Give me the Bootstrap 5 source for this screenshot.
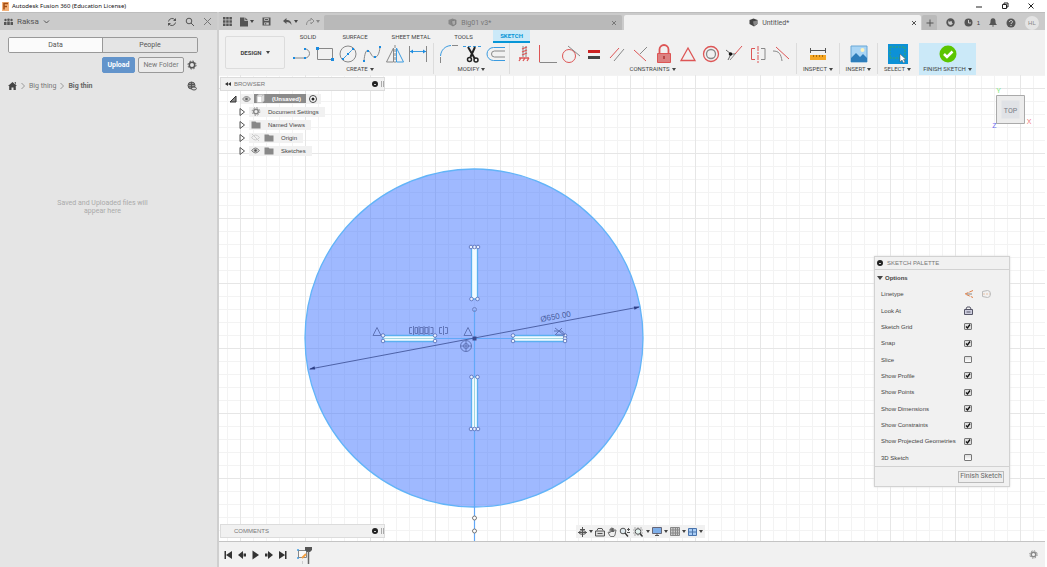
<!DOCTYPE html>
<html lang="en">
<head>
<meta charset="utf-8">
<meta name="viewport" content="width=device-width, initial-scale=1">
<title>Autodesk Fusion 360 (Education License)</title>
<link href="https://cdn.jsdelivr.net/npm/bootstrap@5.3.0/dist/css/bootstrap.min.css" rel="stylesheet">
<style>
  body { font-family: "Liberation Sans", Arial, sans-serif; font-size: 6px; line-height: 8px; color: #444; background: #fff; }
  button { font-size: 6px; line-height: 8px; color: inherit; }
  svg { display: block; flex: none; fill: none; stroke: #555; }
  .app { min-height: 100vh; padding: 0 2px 1px 0; }
  .plain { background: none; border: 0; padding: 0; display: flex; align-items: center; }
  .caret { width: 0; height: 0; border: 2px solid transparent; border-top: 3px solid #444; border-bottom: 0; margin-left: 2px; flex: none; }
  .caret.wide { border-width: 4px 3px 0; margin-left: 0; }

  .title-bar { height: 12px; font-family: "Noto Sans", sans-serif; color: #111; padding: 0 10px 0 1px; gap: 2px; }
  .strip { height: 18px; background: #cbcbcb; border-top: 1px solid #bdbdbd; }

  .side { width: 219px; background: #e5e5e5; border-right: 2px solid #cfcfcf; color: #555; font-family: Roboto, "Liberation Sans", sans-serif; }
  .side .strip { padding: 0 5px 0 4px; }
  .hub { font-size: 8px; color: #555; gap: 4px; }
  .seg { height: 16px; margin: 7px 19px 0 8px; border: 1px solid #999; border-radius: 2px; overflow: hidden; }
  .seg button { border: 0; background: #e5e5e5; font-size: 7px; color: #555; }
  .seg button.active { background: #fbfbfb; border-right: 1px solid #999; }
  .side-actions { margin-top: 4px; padding-right: 20px; gap: 3px; }
  .side-actions .btn { --bs-btn-padding-x: 0; --bs-btn-padding-y: 0; font-size: 7px; line-height: 13px; height: 16px; border-radius: 2px; }
  .btn-up, .btn-up:hover { width: 33px; background: #6394cb; border-color: #6394cb; color: #fff; font-weight: bold; }
  .btn-new { width: 46px; border-color: #999; color: #777; background: #ebebeb; }
  .crumbs { margin-top: 8px; padding: 0 20px 0 8px; height: 10px; gap: 4px; font-size: 7px; color: #777; }
  .crumbs a { color: inherit; text-decoration: none; }
  .crumbs .here { color: #666; font-weight: bold; }
  .empty-note { margin: 108px auto 0; width: 96px; font-size: 7px; color: #aaa; }

  .quick { width: 105px; padding-left: 4px; }
  .quick svg { fill: #555; stroke: none; }
  .doc-tab { height: 15px; background: #b9b9b9; color: #777; border-radius: 2px 2px 0 0; padding: 0 4px; font-size: 7px; font-family: Roboto, sans-serif; }
  .doc-tab.current { background: #f1f1f1; color: #555; margin-left: 2px; }
  .acct { width: 124px; padding: 0 6px 0 1px; }
  .acct .add { width: 15px; height: 15px; background: #bababa; justify-content: center; border-radius: 2px 2px 0 0; }
  .acct .avatar { width: 14px; height: 14px; border-radius: 50%; background: #e4e4e4; color: #888; line-height: 14px; }

  .ribbon { background: #f1f1f1; font-family: Roboto, sans-serif; height: 45px; padding-left: 6px; }
  .design { width: 60px; height: 33px; margin-top: 6px; margin-right: 5px; border: 1px solid #dcdcdc; border-radius: 2px; justify-content: center; font-weight: bold; }
  .modes { height: 13px; padding-left: 4px; }
  .modes button { height: 13px; justify-content: center; font-size: 6px; }
  .m-solid { width: 28px; } .m-surface { width: 66px; } .m-sheet { width: 46px; } .m-tools { width: 59px; } .m-sketch { width: 37px; }
  .modes .on { background: #cbe9f8; color: #0696d7; font-weight: bold; border-bottom: 2px solid #0696d7; }
  .grp { height: 31px; border-right: 1px solid #dcdcdc; }
  .grp .tools { height: 22px; display: flex; align-items: center; justify-content: space-around; }
  .grp > .plain { margin: 0 auto; white-space: nowrap; height: 8px; }
  .g-create { width: 144px; padding-right: 3px; } .g-modify { width: 76px; padding: 0 3px; } .g-constrain { width: 287px; padding: 0 3px 0 2px; }
  .g-inspect { width: 43px; } .g-insert { width: 38px; } .g-select { width: 39px; border: 0; }
  .grp.done { background: #cbe9f8; border: 0; height: 32px; width: 57px; margin-left: 2px; }
  .r { stroke: #dd5555; } .b { stroke: #3a9be0; } .g { stroke: #888; } .k { stroke: #222; }
  .bf { fill: #1b8be0; stroke: none; } 

  .stage { overflow: hidden; background: #fff; min-height: 466px; }
  .bar-panel { width: 165px; height: 14px; background: #f1f1f1; border: 1px solid #dcdcdc; color: #777; padding: 0 0 0 3px; gap: 2px; }
  .dot { width: 6px; height: 6px; border-radius: 50%; background: #222; flex: none; display: flex; align-items: center; justify-content: center; }
  .dot::after { content: ""; width: 2px; height: 1px; background: #ccc; }
  .grip { width: 3px; height: 6px; border: solid #aaa; border-width: 0 1px; margin-left: 1px; }
  .bar-panel .name { padding-left: 10px; }
  .browser { left: 1px; top: 2px; }
  .comments { left: 1px; bottom: 3px; }
  .tree { margin: 1px 0 0 9px; padding: 0; list-style: none; }
  .tree li { height: 13px; display: flex; align-items: center; gap: 4px; }
  .tree .kid { padding-left: 10px; gap: 4px; }
  .tree .cell { background: #f1f1f1; height: 10px; display: flex; align-items: center; gap: 3px; padding: 0 6px 0 1px; }
  .tree .kid .cell { gap: 4px; padding-left: 2px; }
  .tree .kid .cell span { padding-left: 3px; }
  .picked { background: #8b8b8b; color: #fff; height: 9px; padding: 0 5px 0 1px; gap: 7px; }
  .cube { right: 12px; top: 10px; width: 44px; height: 46px; }
  .viewbar { left: 357px; bottom: 3px; height: 13px; width: 129px; background: #f1f1f1; padding: 0 2px; }

  .palette { right: 35px; top: 181px; width: 136px; background: #f1f1f1; border: 1px solid #d2d2d2; box-shadow: 0 0 2px #ddd; }
  .palette header { height: 13px; border-bottom: 1px solid #d2d2d2; padding-left: 2px; gap: 4px; color: #777; }
  .palette h2 { font-size: 6px; line-height: 8px; font-weight: bold; margin: 0; padding: 4px 0 4px 2px; gap: 2px; }
  .opts { display: grid; grid-auto-rows: 1fr; height: 180px; padding-left: 6px; }
  .opts > div { display: flex; align-items: center; }
  .opts label, .opts .lab { width: 83px; }
  .opts input { appearance: none; width: 8px; height: 7px; margin: 0; border: 1px solid #777; border-radius: 1px; background: linear-gradient(#ddd, #fff); }
  .opts input:checked { background: #ddd url("data:image/svg+xml,%3Csvg xmlns='http://www.w3.org/2000/svg' viewBox='0 0 6 5'%3E%3Cpath d='M1 2.5L2.5 4L5 .5' fill='none' stroke='%23111' stroke-width='1.3'/%3E%3C/svg%3E") center / 6px 5px no-repeat; }
  .palette footer { border-top: 1px solid #d2d2d2; height: 20px; padding: 0 5px; }
  .palette footer button { height: 12px; width: 46px; border: 1px solid #bbb; background: #eee; padding: 0; font-family: Roboto, sans-serif; font-size: 7px; line-height: 9px; color: #666; }

  .timeline { background: #f1f1f1; border-top: 1px solid #c4c4c4; height: 26px; padding: 0 7px 0 4px; }
  .timeline .play { gap: 4px; }
  .timeline .play svg { fill: #333; stroke: none; }
</style>
</head>
<body>
<div class="app d-flex flex-column">

  <div class="title-bar d-flex align-items-center">
    <svg width="9" height="9" viewBox="0 0 9 9"><path d="M1 0h7v9H1z" fill="#f3b27a" stroke="none"/><path d="M3 7.500V1.500H7M3 4.500H6" stroke="#a34b10" stroke-width="1.500"/></svg>
    <span class="me-auto">Autodesk Fusion 360 (Education License)</span>
    <button class="plain" aria-label="Minimize"><svg width="8" height="8"><path d="M1 5h6" stroke="#222"/></svg></button>
    <button class="plain mx-3" aria-label="Restore"><svg width="8" height="8"><path d="M1.500 2.500h4v4h-4zM3 2.500V1h4v4H5.500" stroke="#222"/></svg></button>
    <button class="plain" aria-label="Close"><svg width="8" height="8"><path d="M1.500 1.500l5 5M6.500 1.500l-5 5" stroke="#222"/></svg></button>
  </div>

  <div class="d-flex flex-grow-1">

    <aside class="side flex-shrink-0">
      <div class="strip d-flex align-items-center">
        <button class="plain hub">
          <svg width="9" height="8" style="fill:#555;stroke:none"><circle cx="1.500" cy="2" r="1.200"/><circle cx="4.500" cy="1.800" r="1.300"/><circle cx="7.500" cy="2" r="1.200"/><path d="M0 7V4h2.500v3zM3.200 7V3.600h2.600V7zM6.500 7V4H9v3z"/></svg>
          <span>Raksa</span>
          <svg width="7" height="6"><path d="M1 1.500l2.500 2.500L6 1.500"/></svg>
        </button>
        <button class="plain ms-auto" aria-label="Refresh"><svg width="10" height="10"><path d="M1.500 4.500a3.600 3.600 0 0 1 6.500-1.500M8.500 5.500a3.600 3.600 0 0 1-6.500 1.500"/><path d="M9 1v3H6zM1 9V6h3z" fill="#555" stroke="none"/></svg></button>
        <button class="plain ms-2" aria-label="Search"><svg width="10" height="10"><circle cx="4" cy="4" r="2.800"/><path d="M6 6l3 3"/></svg></button>
        <button class="plain ms-2" aria-label="Close panel"><svg width="9" height="9"><path d="M1 1l7 7M8 1L1 8" stroke="#777"/></svg></button>
      </div>
      <div class="seg d-flex">
        <button class="w-50 active">Data</button><button class="w-50">People</button>
      </div>
      <div class="side-actions d-flex align-items-center justify-content-end">
        <button class="btn btn-up">Upload</button>
        <button class="btn btn-new">New Folder</button>
        <button class="plain" aria-label="Settings"><svg width="10" height="10"><circle cx="5" cy="5" r="2.700" stroke-width="1.500"/><circle cx="5" cy="5" r="4" stroke-dasharray="1.600 1.540"/></svg></button>
      </div>
      <nav class="crumbs d-flex align-items-center" aria-label="Folders">
        <a href="#" aria-label="Home"><svg width="9" height="8" style="fill:#444;stroke:none"><path d="M4.500 0L9 4H7.800v4H5.500V5.500h-2V8H1.200V4H0zM6.500 0h1.300v3z"/></svg></a>
        <svg width="4" height="8"><path d="M.5 1l3 3-3 3" stroke="#999"/></svg>
        <a href="#">Big thing</a>
        <svg width="4" height="8"><path d="M.5 1l3 3-3 3" stroke="#999"/></svg>
        <a href="#" class="here">Big thin</a>
        <button class="plain ms-auto" aria-label="Share"><svg width="10" height="10"><circle cx="4.500" cy="4.500" r="3.500" fill="#999"/><path d="M1 3.500h7M1 5.800h7M4.500 1v7"/><ellipse cx="7" cy="7.500" rx="2.400" ry="1.500" fill="#ddd"/></svg></button>
      </nav>
      <div class="d-flex pe-2 me-1"><p class="empty-note text-center">Saved and Uploaded files will appear here</p></div>
    </aside>

    <main class="d-flex flex-column flex-grow-1">
      <div class="strip d-flex align-items-end">
        <div class="quick d-flex align-items-center h-100 flex-shrink-0">
          <button class="plain" aria-label="Data panel"><svg width="9" height="9"><path d="M0 0h2.500v2.500H0zM3.200 0h2.500v2.500H3.200zM6.400 0h2.500v2.500H6.400zM0 3.200h2.500v2.500H0zM3.200 3.200h2.500v2.500H3.200zM6.400 3.200h2.500v2.500H6.400zM0 6.400h2.500v2.500H0zM3.200 6.400h2.500v2.500H3.200zM6.400 6.400h2.500v2.500H6.400z"/></svg></button>
          <button class="plain ms-2" aria-label="File"><svg width="8" height="10"><path d="M0 .5h4.500V4H8v5.500H0zM5.300.5L8 3.200H5.300z"/></svg><i class="caret"></i></button>
          <button class="plain ms-2" aria-label="Save"><svg width="9" height="9"><path fill-rule="evenodd" d="M.5.5h8v8h-8zM2.200 1.200v2.600h4.600V1.200zM2.200 5.500v2.200h4.600V5.500zM3 2h3v1H3zM3.200 6h1v1.500h-1z"/></svg></button>
          <button class="plain ms-2 ps-1" aria-label="Undo"><svg width="9" height="9"><path d="M0 4L3.500 1v2C7 3 8.500 5 8.500 8 7.500 6 6 5 3.500 5v2z"/></svg><i class="caret"></i></button>
          <button class="plain ms-2 opacity-50" aria-label="Redo"><svg width="8" height="9"><path d="M8 4L5 1v2C2 3 .5 5 .5 8M8 4L5 7V5" style="fill:none;stroke:#555"/></svg><i class="caret"></i></button>
        </div>
        <div class="doc-tab d-flex align-items-center flex-fill w-50">
          <a href="#" class="mx-auto d-flex align-items-center gap-1 text-reset text-decoration-none"><svg width="9" height="9"><path d="M.5 2l4-1.500 4 1.500v4L5 8.500.5 6z" fill="#888" stroke="none"/><path d="M3.500 3l4-1v4.500l-3 1z" fill="#aaa" stroke="#777" stroke-width=".7"/></svg>Big01 v3*</a>
          <button class="plain" aria-label="Close tab"><svg width="6" height="6"><path d="M1 1l4 4M5 1L1 5" stroke="#777"/></svg></button>
        </div>
        <div class="doc-tab current d-flex align-items-center flex-fill w-50">
          <a href="#" class="mx-auto d-flex align-items-center gap-1 text-reset text-decoration-none"><svg width="9" height="9"><path d="M.5 2l4-1.500 4 1.500v4L5 8.500.5 6z" fill="#444" stroke="none"/><path d="M4 3.500l4-1v3.500L5 8z" fill="#888" stroke="none"/></svg>Untitled*</a>
          <button class="plain" aria-label="Close tab"><svg width="6" height="6"><path d="M1 1l4 4M5 1L1 5"/></svg></button>
        </div>
        <div class="acct d-flex align-items-center justify-content-between flex-shrink-0">
          <button class="plain add" aria-label="New tab"><svg width="8" height="8"><path d="M4 .5v7M.5 4h7"/></svg></button>
          <button class="plain" aria-label="Extensions"><svg width="9" height="9"><circle cx="4.500" cy="4.500" r="3.300" stroke-width="1.800"/><path d="M3 3l3-1 1 3" stroke-width="1.500"/></svg></button>
          <button class="plain" aria-label="Jobs"><svg width="9" height="9"><circle cx="4.500" cy="4.500" r="4" fill="#555" stroke="none"/><path d="M4.500 2v3H7" stroke="#ccc"/></svg><span class="ms-1">1</span></button>
          <button class="plain" aria-label="Notifications"><svg width="8" height="9" style="fill:#555;stroke:none"><path d="M4 .3c2 0 2.500 1.500 2.500 3.200C6.500 5.500 7.200 6 8 7H0c.8-1 1.500-1.500 1.500-3.500C1.500 1.800 2 .3 4 .3zM3 7.500h2L4 9z"/></svg></button>
          <button class="plain" aria-label="Help"><svg width="10" height="10"><circle cx="5" cy="5" r="4.500" fill="#555" stroke="none"/><path d="M3.500 4c0-2 3-2 3-.2C6.500 5 5 4.800 5 6M5 7v1" stroke="#ddd"/></svg></button>
          <button class="plain avatar justify-content-center">HL</button>
        </div>
      </div>

      <div class="ribbon d-flex">
        <button class="plain design">DESIGN <i class="caret ms-1"></i></button>
        <div>
          <div class="modes d-flex">
            <button class="plain m-solid">SOLID</button>
            <button class="plain m-surface">SURFACE</button>
            <button class="plain m-sheet">SHEET METAL</button>
            <button class="plain m-tools">TOOLS</button>
            <button class="plain m-sketch on">SKETCH</button>
          </div>
          <div class="d-flex">
            <div class="grp g-create">
              <div class="tools">
                <svg width="20" height="20"><path class="g" d="M2 14h11a4.500 4.500 0 0 0 0-9"/><path class="bf" d="M1 13h2v2H1zM12 13h2v2h-2zM12 4h2v2h-2z"/></svg>
                <svg width="20" height="20"><path class="g" d="M2.500 4.500h15v11h-15z"/><path class="bf" d="M1 3h3v3H1zM16 14h3v3h-3z"/></svg>
                <svg width="20" height="20"><circle class="g" cx="10" cy="10" r="8"/><path class="b" d="M4.500 15.500l11-11" stroke-dasharray="6 1"/><path class="bf" d="M4 14h2v2H4zM9 9h2v2H9zM14 4h2v2h-2z"/></svg>
                <svg width="20" height="20"><path class="g" d="M2 17C3 5 6 4 9 10S17 14 18 3"/><path class="bf" d="M1 16h2v2H1zM5 6h2v2H5zM12 12h2v2h-2zM17 2h2v2h-2z"/></svg>
                <svg width="20" height="20"><path class="g" d="M8.500 4v14H1.500z"/><path class="b" d="M11.500 4v14h7z"/><path class="g" d="M10 1v18" stroke-dasharray="3 1"/></svg>
                <svg width="20" height="20"><path class="g" d="M1.500 2v16M18.500 2v16"/><path class="b" d="M2 7.500h16"/><path class="bf" d="M2 7.500l3-2v4zM18 7.500l-3-2v4z"/></svg>
              </div>
              <button class="plain">CREATE<i class="caret"></i></button>
            </div>
            <div class="grp g-modify">
              <div class="tools">
                <svg width="20" height="20"><path class="b" d="M1.500 12C2 6 6 2 12 1.500"/><path class="g" d="M1.500 13v6M13 1.500h6"/></svg>
                <svg width="20" height="20"><path class="b" d="M1 2.500h18" stroke-dasharray="3 2"/><path class="k" d="M6 3l7 12M13 3L8.500 13" stroke-width="2"/><circle class="k" cx="7.500" cy="15.500" r="2" stroke-width="1.500"/><circle class="k" cx="14" cy="16" r="2" stroke-width="1.500"/></svg>
                <svg width="20" height="20"><path class="b" d="M20 3.500H8.500a6 6 0 0 0 0 13H20"/><path class="g" d="M20 7H9.500a3 3 0 0 0 0 6H20"/></svg>
              </div>
              <button class="plain">MODIFY<i class="caret"></i></button>
            </div>
            <div class="grp g-constrain">
              <div class="tools">
                <svg width="20" height="20"><path d="M9 2v11M12 2v11" class="g"/><path class="r" d="M8 5l5-2M8 8l5-2M8 11l5-2M5 14h10M5 17l2-3M9 17l2-3M13 17l2-3" stroke-width="1.300"/></svg>
                <svg width="20" height="20"><path class="r" d="M2.500 1v17"/><path class="g" d="M2.500 18.500H20"/></svg>
                <svg width="20" height="20"><circle class="r" cx="8" cy="12" r="6.500"/><path class="g" d="M7 2l12 10"/></svg>
                <svg width="20" height="20"><path d="M4 7.500h12" stroke="#c22" stroke-width="3"/><path d="M4 13.500h12" stroke="#444" stroke-width="3"/></svg>
                <svg width="20" height="20"><path class="r" d="M3 14L12 4"/><path class="g" d="M7 17L17 5"/></svg>
                <svg width="20" height="20"><path class="r" d="M3 6l12 11"/><path class="g" d="M9 10l7-7"/></svg>
                <svg width="20" height="20"><path d="M5.500 10V5.500a4.500 4.500 0 0 1 9 0V10" stroke="#d55" stroke-width="1.800"/><path d="M3.500 9.500h13v9h-13z" fill="#dc8080" stroke="#d55"/><path d="M10 12v3" stroke="#a33" stroke-width="1.500"/></svg>
                <svg width="20" height="20"><path class="r" d="M10 4l7 12.500H3z" stroke-width="1.300"/></svg>
                <svg width="20" height="20"><circle class="r" cx="10" cy="10" r="7.500" stroke-width="1.300"/><circle class="g" cx="10" cy="10" r="4.500" stroke-width="1.300"/></svg>
                <svg width="20" height="20"><path d="M2 6l5 4-3 6M7 10l4 0" stroke="#666"/><path class="g" d="M6 16l6-7"/><path class="r" d="M11 10l7-8"/><circle cx="6.500" cy="10" r="1.800" fill="#111" stroke="none"/></svg>
                <svg width="20" height="20"><path class="r" d="M7 4.500H3.500v11H7"/><path class="r" d="M10 2v17" stroke-dasharray="5 1 2 1"/><path class="g" d="M13 4.500h4v11h-4"/></svg>
                <svg width="20" height="20"><path class="g" d="M2 7c6 0 8 3 9 10"/><path class="r" d="M5 3l13 12"/></svg>
              </div>
              <button class="plain">CONSTRAINTS<i class="caret"></i></button>
            </div>
            <div class="grp g-inspect">
              <div class="tools"><svg width="20" height="20"><path d="M3 6.500h14M2.500 4v5M17.500 4v5" stroke="#555"/><path d="M2 11h16v5H2z" fill="#f5a623" stroke="none"/><path d="M5.500 11v2M8.500 11v2M11.500 11v2M14.500 11v2" stroke="#a86a08"/></svg></div>
              <button class="plain">INSPECT<i class="caret"></i></button>
            </div>
            <div class="grp g-insert">
              <div class="tools"><svg width="18" height="18"><path d="M1 1h16v16H1z" fill="#a9d5f5" stroke="#69a7d6"/><path d="M1 13l5-5 4 4 3-3 4 4v4H1z" fill="#2d7dbb" stroke="none"/><circle cx="12.500" cy="5" r="2" fill="#fdf3c0" stroke="none"/></svg></div>
              <button class="plain">INSERT<i class="caret"></i></button>
            </div>
            <div class="grp g-select">
              <div class="tools"><svg width="22" height="22"><path d="M1 1h20v20H1z" fill="#0d91d6" stroke="none"/><path d="M3 4h15v11H3z" stroke="#37a66a" stroke-dasharray="2 1"/><path d="M13 11v8l2-2 1.500 3 1.500-1-1.500-2.500H19z" fill="#fff" stroke="#555" stroke-width=".5"/></svg></div>
              <button class="plain">SELECT<i class="caret"></i></button>
            </div>
            <div class="grp done">
              <div class="tools"><svg width="20" height="20"><circle cx="10" cy="10" r="8.500" fill="#5bc500" stroke="none"/><path d="M6 10l3 3 5.500-5.500" stroke="#fff" stroke-width="2.500"/></svg></div>
              <button class="plain">FINISH SKETCH<i class="caret"></i></button>
            </div>
          </div>
        </div>
      </div>

      <div class="stage position-relative flex-grow-1">
        <!-- Sketch canvas: 13-unit grid with a heavier line every fifth -->
        <svg class="position-absolute top-0 start-0 w-100 h-100" viewBox="219 75 826 466" preserveAspectRatio="xMidYMid slice">
          <defs>
            <pattern id="minor" x="305" y="218" width="13" height="13" patternUnits="userSpaceOnUse"><path d="M.5 0v13M0 .5h13" stroke="#f3f3f3"/></pattern>
            <pattern id="major" x="305" y="218" width="65" height="65" patternUnits="userSpaceOnUse"><path d="M.5 0v65M0 .5h65" stroke="#e6e6e6"/></pattern>
            <g id="pt"><circle r="1.800" fill="#e8efff" stroke="#5269b5" stroke-width=".8"/></g>
            <g id="sym"><path d="M-1.500-3H-4v6h2.500M1.500-3H4v6H1.500M0-4.500v9" stroke="#6075b8"/></g>
          </defs>
          <path d="M219 75h826v466H219z" fill="url(#minor)" stroke="none"/>
          <path d="M219 75h826v466H219z" fill="url(#major)" stroke="none"/>
          <circle cx="474" cy="338" r="169" fill="#4678ff" fill-opacity=".52" stroke="#62b4f8" stroke-width="1.300"/>
          <path d="M474.500 310V541M436 338.500h77" stroke="#62a8f8" stroke-width="1.200"/>
          <g fill="#f0fbff" stroke="#5bb0f0" stroke-width="1.300">
            <path d="M471.500 247h6v52h-6zM471.500 377h6v52h-6zM383 335.500h52v6h-52zM513 335.500h52v6h-52z"/>
            <path d="M474.500 378v50M384 338.500h50M514 338.500h50" stroke="#8ccdd8" stroke-width=".8"/>
          </g>
          <g>
            <use href="#pt" x="471" y="247"/><use href="#pt" x="474.500" y="247"/><use href="#pt" x="478" y="247"/><use href="#pt" x="471.500" y="299"/><use href="#pt" x="477.500" y="299"/>
            <use href="#pt" x="471.500" y="377"/><use href="#pt" x="477.500" y="377"/><use href="#pt" x="471" y="429"/><use href="#pt" x="474.500" y="429"/><use href="#pt" x="478" y="429"/>
            <use href="#pt" x="383" y="335.500"/><use href="#pt" x="383" y="341"/><use href="#pt" x="435" y="335.500"/><use href="#pt" x="435" y="341"/>
            <use href="#pt" x="513" y="335.500"/><use href="#pt" x="513" y="341"/><use href="#pt" x="565" y="335.500"/><use href="#pt" x="565" y="338.500"/><use href="#pt" x="565" y="341"/>
          </g>
          <g stroke="#777" fill="#fff"><circle cx="474.500" cy="518" r="2"/><circle cx="474.500" cy="531" r="2"/></g>
          <circle cx="474.500" cy="309.500" r="2" stroke="#6f83c4"/>
          <path d="M310 369L639 307" stroke="#384b90" stroke-width=".8"/>
          <path d="M309 369.200l5.500-3 .7 3.400zM640 306.800l-5.500 3-.7-3.400z" fill="#2c3f86" stroke="none"/>
          <path d="M472.500 336.500h4v4h-4z" fill="#3a4c92" stroke="none"/>
          <g stroke="#6075b8">
            <path d="M377 327.500l4 8h-8zM468 327.500l4 8h-8z"/>
            <circle cx="466" cy="346" r="5.500"/><circle cx="466" cy="346" r="2.500"/><path d="M460.500 346h11M466 340.500v11"/>
            <path d="M555 328l9 7M555 335l7-7M554 331h8l3 4h-9"/>
          </g>
          <use href="#sym" x="413.500" y="330.500"/><use href="#sym" x="419" y="330.500"/><use href="#sym" x="424" y="330.500"/><use href="#sym" x="429" y="330.500"/><use href="#sym" x="443.500" y="330.500"/>
          <text x="541" y="322" transform="rotate(-10.600 541 322)" font-size="8" fill="#4a5f9f" stroke="none">Ø650.00</text>
        </svg>

        <section class="browser position-absolute">
          <div class="bar-panel d-flex align-items-center">
            <svg width="8" height="6" style="fill:#333;stroke:none"><path d="M4 1v4L1 3zM7 1v4L4 3z"/></svg><span class="me-auto">BROWSER</span><i class="dot"></i><i class="grip"></i>
          </div>
          <ul class="tree">
            <li><svg width="8" height="8"><path d="M7 1v6H1z" fill="#888" stroke="#333"/></svg>
              <div class="cell pe-1"><svg width="9" height="6"><path d="M.5 3q4-5 8 0-4 5-8 0z" fill="#ccc" stroke="#888"/><circle cx="4.500" cy="3" r="1.300" fill="#666" stroke="none"/></svg>
                <div class="picked d-flex align-items-center fw-bold"><svg width="10" height="9"><path d="M2 2l2-1.500h5V7L7 8.500H2z" fill="#fff" stroke="#bbb"/><path d="M2 2h5v6.500M7 2l2-1.500" stroke="#bbb"/></svg>(Unsaved)</div>
                <svg width="8" height="8"><circle cx="4" cy="4" r="3.500" fill="#fff" stroke="#444"/><circle cx="4" cy="4" r="1.500" fill="#222" stroke="none"/></svg></div></li>
            <li class="kid"><svg width="6" height="8"><path d="M1 .5L5.500 4 1 7.500z"/></svg><div class="cell"><svg width="10" height="9"><circle cx="5" cy="4.500" r="2.300" stroke="#888" stroke-width="1.500"/><circle cx="5" cy="4.500" r="3.800" stroke="#888" stroke-dasharray="1.500 1.480"/></svg><span>Document Settings</span></div></li>
            <li class="kid"><svg width="6" height="8"><path d="M1 .5L5.500 4 1 7.500z"/></svg><div class="cell"><svg width="10" height="8"><path d="M.5.5h4l1 1h4v6h-9z" fill="#888" stroke="none"/></svg><span>Named Views</span></div></li>
            <li class="kid"><svg width="6" height="8"><path d="M1 .5L5.500 4 1 7.500z"/></svg><div class="cell"><svg width="9" height="7"><path d="M.5 3.500q4-5 8 0-4 5-8 0zM1 0l7 7" stroke="#ccc"/></svg><svg width="10" height="8"><path d="M.5.5h4l1 1h4v6h-9z" fill="#888" stroke="none"/></svg><span>Origin</span></div></li>
            <li class="kid"><svg width="6" height="8"><path d="M1 .5L5.500 4 1 7.500z"/></svg><div class="cell"><svg width="9" height="7"><path d="M.5 3.500q4-5 8 0-4 5-8 0z" fill="#ccc" stroke="#888"/><circle cx="4.500" cy="3.500" r="1.300" fill="#555" stroke="none"/></svg><svg width="10" height="8"><path d="M.5.5h4l1 1h4v6h-9z" fill="#888" stroke="none"/></svg><span>Sketches</span></div></li>
          </ul>
        </section>

        <svg class="cube position-absolute" viewBox="989 85 44 46">
          <path d="M996.500 95.500h28v28h-28z" fill="#ececec" stroke="#aaa"/><path d="M1001.500 100.500h18v18h-18z" fill="#e0e2e6" stroke="none"/>
          <g stroke="none" text-anchor="middle"><text x="1010.500" y="112.500" font-size="7" fill="#777b85" font-family="Roboto">TOP</text>
          <text x="998.500" y="93" font-size="7" fill="#7be87b">Y</text><text x="994.500" y="128" font-size="7" fill="#6b6bf0">Z</text><text x="1029" y="124" font-size="7" fill="#f07878">X</text></g>
        </svg>

        <section class="palette position-absolute">
          <header class="d-flex align-items-center"><i class="dot"></i><span>SKETCH PALETTE</span></header>
          <h2 class="d-flex align-items-center"><i class="caret wide"></i>Options</h2>
          <div class="opts">
            <div><span class="lab">Linetype</span><button class="plain" aria-label="Construction"><svg width="10" height="8"><path d="M9 .5L1 4l8 3.500" stroke="#e08048" stroke-dasharray="4 1"/><path d="M3 4h5" stroke="#888"/></svg></button><button class="plain ms-2" aria-label="Centerline"><svg width="9" height="8"><path d="M.5 1.500l5-1q3 0 3 3.500T5.500 7.500l-5-1z" stroke="#bbb"/><path d="M1 4h7" stroke="#e8c3a8" stroke-dasharray="2 1"/></svg></button></div>
            <div><span class="lab">Look At</span><button class="plain" aria-label="Look At"><svg width="9" height="9"><path d="M.5 3.500h8v5h-8z" fill="#ccd" stroke="#556"/><path d="M2 3l1-2h3l1 2M2.500 6h4" stroke="#556"/></svg></button></div>
            <div><label for="o1">Sketch Grid</label><input type="checkbox" id="o1" checked></div>
            <div><label for="o2">Snap</label><input type="checkbox" id="o2" checked></div>
            <div><label for="o3">Slice</label><input type="checkbox" id="o3"></div>
            <div><label for="o4">Show Profile</label><input type="checkbox" id="o4" checked></div>
            <div><label for="o5">Show Points</label><input type="checkbox" id="o5" checked></div>
            <div><label for="o6">Show Dimensions</label><input type="checkbox" id="o6" checked></div>
            <div><label for="o7">Show Constraints</label><input type="checkbox" id="o7" checked></div>
            <div><label for="o8">Show Projected Geometries</label><input type="checkbox" id="o8" checked></div>
            <div><label for="o9">3D Sketch</label><input type="checkbox" id="o9"></div>
          </div>
          <footer class="d-flex align-items-center justify-content-end"><button>Finish Sketch</button></footer>
        </section>

        <section class="comments position-absolute bar-panel d-flex align-items-center">
          <span class="name me-auto">COMMENTS</span><i class="dot"></i><i class="grip"></i>
        </section>

        <div class="viewbar position-absolute d-flex align-items-center justify-content-between">
          <button class="plain" aria-label="Orbit"><svg width="9" height="10"><path d="M4.500 0v10M0 5.500h9M2 2.500h5" stroke="#555"/><ellipse cx="4.500" cy="5.500" rx="3.500" ry="1.800"/></svg><i class="caret"></i></button>
          <button class="plain" aria-label="Look At"><svg width="10" height="10"><path d="M.5 4h9v5h-9z" fill="#ddd"/><path d="M2 3.500l1-2h4l1 2M2.500 6.500h5"/></svg></button>
          <button class="plain" aria-label="Pan"><svg width="10" height="10"><path d="M3 9L1 5.500l1-.5 1 1V2h1.200v3V1h1.200v4l.2-3.500h1V5l.4-2H9L8 8 7 9.500H3.500z" fill="#eee" stroke-width=".8"/></svg></button>
          <button class="plain" aria-label="Zoom"><svg width="11" height="10"><circle cx="4" cy="4" r="2.800" fill="#dfe9ee"/><path d="M6 6l3 3.500" stroke="#333" stroke-width="1.300"/><path d="M8 2.500h3M9.500 1v3M8 5.500h3"/></svg></button>
          <button class="plain" aria-label="Fit"><svg width="11" height="10"><path d="M1 1h8v7H1z" stroke="#aaa" stroke-dasharray="2 1"/><circle cx="5" cy="4.500" r="2.800" fill="#e4f2ee"/><path d="M7 6.500l2.500 3" stroke="#333" stroke-width="1.300"/></svg><i class="caret"></i></button>
          <button class="plain" aria-label="Display"><svg width="10" height="9"><path d="M.5.500h9v6h-9z" fill="#7eaee8" stroke="#667"/><path d="M3 8.500h4M5 6.500v2"/></svg><i class="caret"></i></button>
          <button class="plain" aria-label="Grid"><svg width="10" height="9"><path d="M.5.500h9v8h-9zM.5 3h9M.5 6h9M3 0v9M5.500 0v9M7.500 0v9" fill="#ccc" stroke="#888"/></svg><i class="caret"></i></button>
          <button class="plain" aria-label="Viewports"><svg width="9" height="8"><path d="M.5.500h8v7h-8zM.5 4h8M4.500.500v7" fill="#a9cdf5" stroke="#4a74ac"/></svg><i class="caret"></i></button>
        </div>
      </div>

      <div class="timeline d-flex align-items-center">
        <div class="play d-flex">
          <button class="plain" aria-label="To start"><svg width="10" height="10"><path d="M1.500 1H3v8H1.500zM9 1v8L3 5z"/></svg></button>
          <button class="plain" aria-label="Step back"><svg width="10" height="10"><path d="M6 1v8L1 5zM6.500 3.500H9v3H6.500z"/></svg></button>
          <button class="plain" aria-label="Play"><svg width="9" height="10"><path d="M1.500.500v9L8 5z"/></svg></button>
          <button class="plain" aria-label="Step forward"><svg width="10" height="10"><path d="M4 1v8l5-4zM1 3.500h2.500v3H1z"/></svg></button>
          <button class="plain" aria-label="To end"><svg width="10" height="10"><path d="M7 1h1.500v8H7zM1 1v8l6-4z"/></svg></button>
        </div>
        <svg class="ms-2" width="18" height="20"><path d="M2.500 5.500h8v7h-8z" stroke="#888" fill="#fafafa"/><path class="bf" d="M1 4h2v2H1zM9.500 4h2v2h-2zM1 12h2v2H1z" opacity=".6"/><path d="M6 13l4-4" stroke="#f5a040" stroke-width="1.800"/><path d="M6.500 16v3" stroke="#ccc"/><path d="M9 2h7v3l-2 2h-3L9 5z" fill="#555" stroke="none"/><path d="M12.500 6v13" stroke="#666" stroke-width="1.500"/></svg>
        <button class="plain ms-auto" aria-label="Timeline settings"><svg width="9" height="9"><circle cx="4.500" cy="4.500" r="2.300" stroke="#888" stroke-width="1.500"/><circle cx="4.500" cy="4.500" r="3.700" stroke="#888" stroke-dasharray="1.500 1.400"/></svg></button>
      </div>
    </main>
  </div>
</div>
<script src="https://cdn.jsdelivr.net/npm/bootstrap@5.3.0/dist/js/bootstrap.bundle.min.js"></script>
</body>
</html>
